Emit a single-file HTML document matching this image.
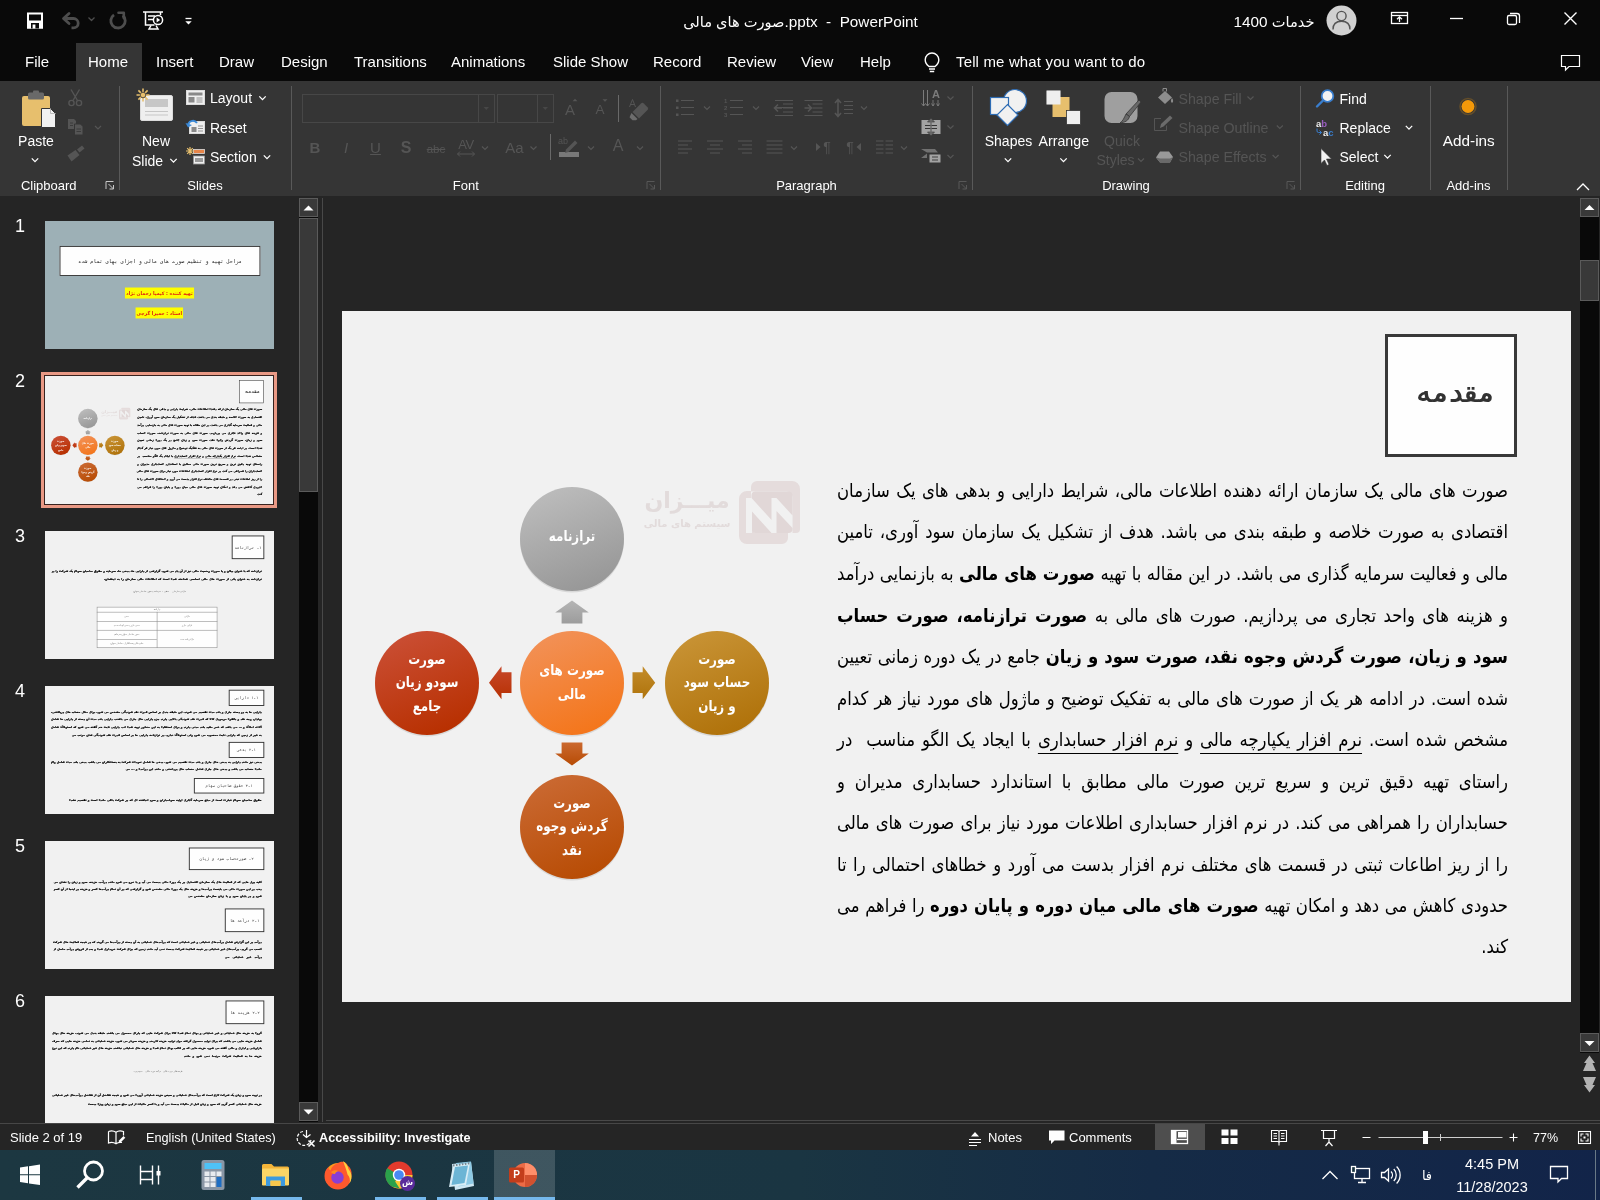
<!DOCTYPE html>
<html lang="en">
<head>
<meta charset="utf-8">
<title>PowerPoint</title>
<style>
*{box-sizing:border-box;margin:0;padding:0}
html,body{width:1600px;height:1200px;overflow:hidden;background:#262626}
body{font-family:"Liberation Sans","DejaVu Sans",sans-serif;color:#fff;position:relative}
#root{position:absolute;left:0;top:0;width:1600px;height:1200px;will-change:transform;opacity:0.9999}
.abs{position:absolute}
#titlebar{position:absolute;left:0;top:0;width:1600px;height:81px;background:#0a0a0a}
#ribbon{position:absolute;left:0;top:81px;width:1600px;height:115px;background:#363636}
#hometab{position:absolute;left:76px;top:43px;width:66px;height:38px;background:#363636}
.tab{position:absolute;top:52px;font-size:15px;color:#fff;white-space:nowrap;line-height:20px}
.t{position:absolute;white-space:nowrap}
#work{position:absolute;left:0;top:196px;width:1600px;height:927px;background:#262626}
#status{position:absolute;left:0;top:1123px;width:1600px;height:27px;background:#262626;border-top:1px solid #484848}
#taskbar{position:absolute;left:0;top:1150px;width:1600px;height:50px;background:linear-gradient(90deg,#1d3842 0%,#1b3643 50%,#162c47 72%,#13254a 100%)}

.slide{position:absolute;width:1229px;height:691px;background:#f2f2f2;overflow:hidden;color:#000}
.tbox{background:#fff;border:3px solid #3a3a3a}
.bl{position:absolute;left:392px;width:774px;height:30px;line-height:30px;font-family:"DejaVu Sans",sans-serif;font-size:19px;color:#000;white-space:nowrap;text-align:justify;text-align-last:justify;direction:rtl;transform:scaleX(0.8669);transform-origin:100% 50%}
.bl.last{text-align:right;text-align-last:right}
.bl b{font-weight:bold}
.bl u{text-underline-offset:7px;text-decoration-thickness:1px}
.ct{position:absolute;width:104px;height:26px;line-height:26px;text-align:center;font-family:"DejaVu Sans",sans-serif;font-weight:bold;font-size:14.5px;color:#fff;white-space:nowrap;transform:scaleX(0.82)}

.mini{position:absolute;left:0;top:0;width:1229px;height:691px;transform:scale(0.18633);transform-origin:0 0;color:#000}
.mb{background:#fff;border:5px solid #333;text-align:center;font-family:"DejaVu Sans Mono","DejaVu Sans",monospace;color:#444;white-space:nowrap}
.ml{position:absolute;height:30px;line-height:30px;font-family:"DejaVu Sans",sans-serif;font-weight:bold;font-size:15px;color:#000;-webkit-text-stroke:1.2px #000;white-space:nowrap;overflow:hidden;text-align:justify;text-align-last:justify}
.ml.last{text-align-last:right}
.mc{position:absolute;height:30px;line-height:30px;font-family:"DejaVu Sans",sans-serif;font-size:12px;color:#666;white-space:nowrap;text-align:center;overflow:hidden}
.sbtn{background:#3a3a3a;border:1px solid #5c5c5c}
.mini .bl{font-weight:bold;font-size:16.5px;-webkit-text-stroke:1px #000}
/* placeholders for later sections */
</style>
</head>
<body>
<div id="root">
<div id="titlebar"></div>
<div id="hometab"></div>
<div id="ribbon"></div>
<div id="work"></div>

<!-- title bar icons -->
<svg class="abs" style="left:0;top:0" width="1600" height="81" viewBox="0 0 1600 81">
  <!-- save -->
  <rect x="28" y="13.500" width="14" height="14" fill="none" stroke="#fff" stroke-width="2"/>
  <rect x="27" y="20.500" width="16" height="8" fill="#fff"/>
  <rect x="31" y="23" width="8" height="5.500" fill="#0a0a0a"/>
  <rect x="32.600" y="24.500" width="2.800" height="4" fill="#fff"/>
  <!-- undo -->
  <g fill="none" stroke="#4e4e4e" stroke-width="2.800" stroke-linejoin="round">
    <path d="M69 13.500l-5.500 5 5.500 5" stroke-linecap="round"/>
    <path d="M64 18.500h9.500a4.700 4.700 0 0 1 0 9.400h-2"/>
    <path d="M88.500 17.500l3 3 3-3" stroke-width="1.300"/>
    <!-- redo -->
    <path d="M114 14.800a7.200 7.200 0 1 0 8.800 0.600"/>
    <path d="M118.500 12.800h5.300v5.300" stroke-width="2.600" stroke-linecap="round"/>
  </g>
  <!-- present from beginning -->
  <g fill="none" stroke="#fff" stroke-width="1.5">
    <path d="M143 12h20"/>
    <path d="M145.5 12v13h9"/>
    <path d="M160.5 12v3"/>
    <path d="M148 16h7M148 19.5h5"/>
    <circle cx="158" cy="20" r="4.6" fill="#0a0a0a"/>
    <path d="M151 25.5l-2 3.5h9l-2-3.5"/>
  </g>
  <path d="M156.6 17.6l3.6 2.4-3.6 2.4z" fill="#fff"/>
  <!-- customize -->
  <path d="M185.5 18.5h6" stroke="#fff" stroke-width="1.3"/>
  <path d="M185.3 21.2h6.4l-3.2 3.4z" fill="#fff"/>
  <!-- avatar -->
  <circle cx="1341.5" cy="20.5" r="15" fill="#d2d2d2"/>
  <g fill="none" stroke="#555" stroke-width="1.4">
    <circle cx="1341.5" cy="16" r="4.6"/>
    <path d="M1333 29.5c0-6 3.5-8.2 8.500-8.2s8.500 2.200 8.500 8.200"/>
  </g>
  <!-- ribbon display options -->
  <g fill="none" stroke="#fff" stroke-width="1.300" transform="translate(0,-1)">
    <rect x="1391.500" y="13.500" width="16" height="11"/>
    <path d="M1391.500 16.500h16"/>
    <path d="M1399.500 23v-5M1397 20.300l2.500-2.500 2.500 2.500"/>
  <!-- minimize -->
  <path d="M1450 19.500h13"/>
  <!-- restore -->
    <rect x="1507.500" y="16.500" width="9" height="9" rx="1.500"/>
    <path d="M1510 14.500h7a2.500 2.500 0 0 1 2.500 2.500v7"/>
  <!-- close -->
  <path d="M1564.500 13.500l12 12M1576.500 13.500l-12 12" stroke-width="1.400"/>
  </g>
  <!-- lightbulb -->
  <g fill="none" stroke="#fff" stroke-width="1.4">
    <path d="M929 66.500c-2.800-2.200-3.800-4.200-3.800-6.800a6.800 6.800 0 0 1 13.600 0c0 2.600-1 4.600-3.800 6.800z"/>
    <path d="M929 69h6M929.800 71.500h4.400"/>
  </g>
  <!-- comments -->
  <path d="M1561.500 55.500h18v11h-10.500l-3.500 3.500v-3.500h-4z" fill="none" stroke="#fff" stroke-width="1.2"/>
</svg>
<div class="t" dir="rtl" style="left:683px;top:12px;width:235px;text-align:center;font-size:15.3px;line-height:20px;direction:ltr"><span dir="rtl" style="font-size:14.6px">صورت های مالی</span>.pptx&nbsp; - &nbsp;PowerPoint</div>
<div class="t" style="left:1231px;top:12px;width:86px;text-align:center;font-size:15.3px;line-height:20px"><span style="font-size:14.6px">خدمات</span> 1400</div>
<div class="tab" style="left:25px">File</div>
<div class="tab" style="left:88px">Home</div>
<div class="tab" style="left:156px">Insert</div>
<div class="tab" style="left:219px">Draw</div>
<div class="tab" style="left:281px">Design</div>
<div class="tab" style="left:354px">Transitions</div>
<div class="tab" style="left:451px">Animations</div>
<div class="tab" style="left:553px">Slide Show</div>
<div class="tab" style="left:653px">Record</div>
<div class="tab" style="left:727px">Review</div>
<div class="tab" style="left:801px">View</div>
<div class="tab" style="left:860px">Help</div>
<div class="tab" style="left:956px;letter-spacing:0.15px">Tell me what you want to do</div>

<svg class="abs" style="left:0;top:0" width="1600" height="200" viewBox="0 0 1600 200">
<path d="M119.5 86V190" stroke="#5a5a5a" stroke-width="1"/>
<path d="M291.5 86V190" stroke="#5a5a5a" stroke-width="1"/>
<path d="M660.5 86V190" stroke="#5a5a5a" stroke-width="1"/>
<path d="M972.5 86V190" stroke="#5a5a5a" stroke-width="1"/>
<path d="M1300.5 86V190" stroke="#5a5a5a" stroke-width="1"/>
<path d="M1430.5 86V190" stroke="#5a5a5a" stroke-width="1"/>
<path d="M1507.5 86V190" stroke="#5a5a5a" stroke-width="1"/>
<path d="M106 189.0v-7.5h7.5" fill="none" stroke="#c8c8c8" stroke-width="1"/><path d="M108.5 184.0l5 5M113.5 185.0v4h-4" fill="none" stroke="#c8c8c8" stroke-width="1"/>
<path d="M647 189.0v-7.5h7.5" fill="none" stroke="#585858" stroke-width="1"/><path d="M649.5 184.0l5 5M654.5 185.0v4h-4" fill="none" stroke="#585858" stroke-width="1"/>
<path d="M959 189.0v-7.5h7.5" fill="none" stroke="#585858" stroke-width="1"/><path d="M961.5 184.0l5 5M966.5 185.0v4h-4" fill="none" stroke="#585858" stroke-width="1"/>
<path d="M1287 189.0v-7.5h7.5" fill="none" stroke="#585858" stroke-width="1"/><path d="M1289.5 184.0l5 5M1294.5 185.0v4h-4" fill="none" stroke="#585858" stroke-width="1"/>
<path d="M1577 190l6-6 6 6" fill="none" stroke="#fff" stroke-width="1.3"/>
<g>
<rect x="22" y="96" width="28" height="30" rx="2" fill="#e8c06e"/>
<rect x="28" y="92.500" width="16" height="7" rx="1.500" fill="#6a6a6a"/>
<rect x="33" y="90.500" width="6" height="4" rx="1" fill="#6a6a6a"/>
<path d="M41.500 108.500h9l5 5v14h-14z" fill="#f2f2f2" stroke="#363636" stroke-width="1"/>
<path d="M50.500 108.500v5h5" fill="none" stroke="#bdbdbd" stroke-width="1"/>
</g>
<path d="M31.8 158.4l3.2 3.2 3.2 -3.2" fill="none" stroke="#fff" stroke-width="1.3"/>
<g fill="none" stroke="#565656" stroke-width="1.4">
<path d="M71 89.500l6.500 11M79.500 89.500l-6.500 11"/>
<circle cx="71.500" cy="103" r="2.600"/><circle cx="79" cy="103" r="2.600"/></g>
<g fill="#565656">
<path d="M68 119h6l2 2v8h-8z"/><path d="M74.500 124h6l2.500 2.500v8.500h-8.500z" stroke="#363636" stroke-width="1"/>
</g><g stroke="#363636" stroke-width="0.800"><path d="M70 123h3M70 125.500h3M76.500 129h4.500M76.500 131.500h4.500"/></g>
<path d="M95.0 126.0l3.0 3.0 3.0 -3.0" fill="none" stroke="#565656" stroke-width="1.2"/>
<g fill="#565656"><path d="M67.500 155.500l8-5.500 4 5-8 6.500z"/><path d="M77 149.500l5-4 2.500 3-5 4z"/></g>
<g>
<rect x="140.500" y="95.500" width="32" height="25" rx="1.500" fill="#f0f0f0" stroke="#dcdcdc"/>
<rect x="145" y="99" width="23" height="8" fill="#c8c8c8"/>
<path d="M145 111.500h23M145 115h23" stroke="#c8c8c8" stroke-width="1.200"/>
<g stroke="#e8c06e" stroke-width="1.600"><path d="M143 88.500v13M136.500 95h13M138.400 90.400l9.200 9.200M147.600 90.400l-9.200 9.200"/></g>
<circle cx="143" cy="95" r="2.800" fill="#e8c06e" stroke="#363636" stroke-width="0.800"/>
</g>
<path d="M170.3 158.9l3.2 3.2 3.2 -3.2" fill="none" stroke="#fff" stroke-width="1.3"/>
<g><rect x="186.500" y="90.500" width="18" height="14" fill="#f0f0f0" stroke="#dcdcdc"/>
<rect x="188.500" y="92.500" width="14" height="3" fill="#8a8a8a"/><rect x="188.500" y="97" width="6" height="5.500" fill="#8a8a8a"/>
<path d="M196.500 98h6M196.500 100h6M196.500 102h6" stroke="#8a8a8a" stroke-width="0.900"/></g>
<path d="M259.3 96.4l3.2 3.2 3.2 -3.2" fill="none" stroke="#fff" stroke-width="1.3"/>
<g><rect x="189.500" y="121.500" width="15" height="12" fill="#f0f0f0" stroke="#dcdcdc"/>
<rect x="191.500" y="127" width="5" height="5" fill="#8a8a8a"/><path d="M198 126h5M198 128.500h5M198 131h5" stroke="#8a8a8a" stroke-width="0.900"/>
<path d="M188 126c0-5 6-7 9-3" fill="none" stroke="#3b8ad8" stroke-width="2"/><path d="M185.500 123l2.500 4.500 4-2.500z" fill="#3b8ad8"/></g>
<g><rect x="193.500" y="149.500" width="11" height="4" fill="#e8864a" stroke="#dcdcdc" stroke-width="0.800"/>
<rect x="193.500" y="156" width="11" height="8" fill="#f0f0f0" stroke="#9a9a9a" stroke-width="0.800"/><rect x="195" y="158" width="8" height="4" fill="#9a9a9a"/>
<g stroke="#e8c06e" stroke-width="1.200"><path d="M190 147v8M186 151h8M187.200 148.200l5.600 5.600M192.800 148.200l-5.600 5.600"/></g></g>
<path d="M263.8 155.4l3.2 3.2 3.2 -3.2" fill="none" stroke="#fff" stroke-width="1.3"/>
<g fill="none" stroke="#484848" stroke-width="1"><rect x="302.500" y="94.500" width="192" height="28"/><path d="M478.500 94.500v28"/><rect x="497.500" y="94.500" width="56" height="28"/><path d="M537.500 94.500v28"/></g>
<path d="M483.500 107h5.500l-2.750 3z M542.500 107h5.500l-2.750 3z" fill="#484848"/>
<path d="M618.5 95V122" stroke="#6a6a6a" stroke-width="1"/>
<path d="M550.5 134V160" stroke="#6a6a6a" stroke-width="1"/>
<path d="M632.500 112l8.500-8.500a2 2 0 0 1 2.800 0l3.700 3.700a2 2 0 0 1 0 2.800l-8.500 8.500z" fill="#565656"/><path d="M631.500 113l6 6-1.500 1.200h-3.500l-3-3z" fill="#6e6e6e"/><path d="M629.500 107l3-7.500 3 7.500M630.700 104.500h3.600" fill="none" stroke="#565656" stroke-width="1"/>
<path d="M572.500 101.300l2.500-2.500 2.500 2.500z" fill="#565656"/><path d="M602.500 99.300l2.500 2.500 2.500-2.500z" fill="#565656"/>
<path d="M457.500 154h17M460 151.500l-2.500 2.500 2.500 2.500M472 151.500l2.500 2.500-2.500 2.500" fill="none" stroke="#565656" stroke-width="1"/>
<path d="M482.0 146.5l3.0 3.0 3.0 -3.0" fill="none" stroke="#565656" stroke-width="1.2"/>
<path d="M530.5 146.5l3.0 3.0 3.0 -3.0" fill="none" stroke="#565656" stroke-width="1.2"/>
<rect x="559" y="152" width="20" height="5" fill="#7a7a7a"/><path d="M566 149.500l9-9 2.500 2.500-9 9-3.500 1z" fill="#565656"/>
<path d="M588.0 146.5l3.0 3.0 3.0 -3.0" fill="none" stroke="#565656" stroke-width="1.2"/>
<path d="M637.0 146.5l3.0 3.0 3.0 -3.0" fill="none" stroke="#565656" stroke-width="1.2"/>
<rect x="676" y="99.5" width="2.500" height="2.500" fill="#565656"/><path d="M681 100.5h13" stroke="#565656" stroke-width="1"/>
<rect x="676" y="106.5" width="2.500" height="2.500" fill="#565656"/><path d="M681 107.5h13" stroke="#565656" stroke-width="1"/>
<rect x="676" y="113.5" width="2.500" height="2.500" fill="#565656"/><path d="M681 114.5h13" stroke="#565656" stroke-width="1"/>
<path d="M704.0 106.5l3.0 3.0 3.0 -3.0" fill="none" stroke="#565656" stroke-width="1.2"/>
<path d="M730 100.5h13" stroke="#565656" stroke-width="1"/>
<path d="M730 107.5h13" stroke="#565656" stroke-width="1"/>
<path d="M730 114.5h13" stroke="#565656" stroke-width="1"/>
<path d="M753.0 106.5l3.0 3.0 3.0 -3.0" fill="none" stroke="#565656" stroke-width="1.2"/>
<path d="M775.0 107.5h18" stroke="#565656" stroke-width="1"/>
<path d="M775 100.500h18M775 115.500h18" stroke="#565656" stroke-width="1"/>
<path d="M783 104h10M783 108h10M783 112h10" stroke="#565656" stroke-width="1"/>
<path d="M775 108h7M778 104.500l-3.500 3.500 3.500 3.500" fill="none" stroke="#565656" stroke-width="1.600"/>
<path d="M804.5 100.500h18M804.5 115.500h18" stroke="#565656" stroke-width="1"/>
<path d="M812.5 104h10M812.5 108h10M812.5 112h10" stroke="#565656" stroke-width="1"/>
<path d="M804.5 108h7M808.0 104.500l3.500 3.500-3.500 3.500" fill="none" stroke="#565656" stroke-width="1.600"/>
<path d="M838 100v16M835 103l3-3.500 3 3.500M835 113l3 3.500 3-3.500" fill="none" stroke="#565656" stroke-width="1.600"/>
<path d="M844 101.500h9M844 105.500h9M844 109.500h9M844 113.500h9" stroke="#565656" stroke-width="1"/>
<path d="M861.0 106.5l3.0 3.0 3.0 -3.0" fill="none" stroke="#565656" stroke-width="1.2"/>
<path d="M678.0 141.0h14" stroke="#565656" stroke-width="1"/>
<path d="M678.0 145.0h10" stroke="#565656" stroke-width="1"/>
<path d="M678.0 149.0h14" stroke="#565656" stroke-width="1"/>
<path d="M678.0 153.0h10" stroke="#565656" stroke-width="1"/>
<path d="M707.0 141.0h16" stroke="#565656" stroke-width="1"/>
<path d="M710.0 145.0h10" stroke="#565656" stroke-width="1"/>
<path d="M707.0 149.0h16" stroke="#565656" stroke-width="1"/>
<path d="M710.0 153.0h10" stroke="#565656" stroke-width="1"/>
<path d="M738 141h14" stroke="#565656" stroke-width="1"/>
<path d="M742 145h10" stroke="#565656" stroke-width="1"/>
<path d="M738 149h14" stroke="#565656" stroke-width="1"/>
<path d="M742 153h10" stroke="#565656" stroke-width="1"/>
<path d="M766.5 141.0h16" stroke="#565656" stroke-width="1"/>
<path d="M766.5 145.0h16" stroke="#565656" stroke-width="1"/>
<path d="M766.5 149.0h16" stroke="#565656" stroke-width="1"/>
<path d="M766.5 153.0h16" stroke="#565656" stroke-width="1"/>
<path d="M791.0 146.5l3.0 3.0 3.0 -3.0" fill="none" stroke="#565656" stroke-width="1.2"/>
<path d="M816 143l4.500 4-4.500 4z" fill="#565656"/>
<path d="M861 143l-4.500 4 4.500 4z" fill="#565656"/>
<path d="M876 141h7.500M885.500 141h7.500" stroke="#565656" stroke-width="1"/>
<path d="M876 145h7.500M885.500 145h7.500" stroke="#565656" stroke-width="1"/>
<path d="M876 149h7.500M885.500 149h7.500" stroke="#565656" stroke-width="1"/>
<path d="M876 153h7.500M885.500 153h7.500" stroke="#565656" stroke-width="1"/>
<path d="M901.0 146.5l3.0 3.0 3.0 -3.0" fill="none" stroke="#565656" stroke-width="1.2"/>
<path d="M923.500 90v16M927.500 90v16M921.500 103.500l2 2.500 2-2.500M925.500 103.500l2 2.500 2-2.500" fill="none" stroke="#7c7c7c" stroke-width="1"/>
<path d="M933 100v6M938 100v6M931.500 103.500l1.500 2.500 1.500-2.500M936.500 103.500l1.500 2.500 1.500-2.500" fill="none" stroke="#7c7c7c" stroke-width="0.900"/>
<path d="M947.5 96.5l3.0 3.0 3.0 -3.0" fill="none" stroke="#565656" stroke-width="1.2"/>
<rect x="921.500" y="120" width="19" height="14" fill="#a4a4a4"/><path d="M925 125.500h12M925 128.500h12" stroke="#363636" stroke-width="1"/><path d="M927.500 122l3.500-4 3.500 4zM927.500 132l3.500 4 3.500-4z" fill="#6a6a6a" stroke="#363636" stroke-width="0.600"/><path d="M931 121v12" stroke="#6a6a6a" stroke-width="1.400"/>
<path d="M947.5 125.5l3.0 3.0 3.0 -3.0" fill="none" stroke="#565656" stroke-width="1.2"/>
<path d="M921 149h14l3 3.500h-11zM921 158l6-4.500v4.500z" fill="#727272"/><rect x="929.500" y="154.500" width="11" height="8" fill="#a4a4a4"/><path d="M932 157h6M932 160h6" stroke="#363636" stroke-width="0.900"/>
<path d="M947.5 155.0l3.0 3.0 3.0 -3.0" fill="none" stroke="#565656" stroke-width="1.2"/>
<g stroke="#2f6db5" stroke-width="1.200">
<circle cx="1015" cy="101" r="11.500" fill="#f2f2f2"/>
<rect x="990.500" y="97.500" width="18" height="17" fill="#f2f2f2"/>
<path d="M1007.500 104.500l10.500 10.500-10.500 10.500-10.500-10.500z" fill="#f2f2f2"/></g>
<path d="M1004.8 158.4l3.2 3.2 3.2 -3.2" fill="none" stroke="#fff" stroke-width="1.3"/>
<g><rect x="1046.500" y="90.500" width="14" height="14" fill="#f0f0f0" stroke="#363636" stroke-width="0.800"/>
<rect x="1052.500" y="97" width="17" height="20" fill="#e8c06e"/>
<rect x="1066.500" y="110.500" width="14" height="14" fill="#f0f0f0" stroke="#363636" stroke-width="0.800"/>
<rect x="1046.500" y="90.500" width="14" height="14" fill="#f0f0f0"/></g>
<path d="M1060.3 158.4l3.2 3.2 3.2 -3.2" fill="none" stroke="#fff" stroke-width="1.3"/>
<rect x="1104.500" y="92" width="33" height="31" rx="7" fill="#a0a0a0"/>
<path d="M1141 102l-11.500 14.500-3.500-2.500 13-14z" fill="#6a6a6a" stroke="#363636" stroke-width="0.800"/><path d="M1126 114l3.500 2.500c-1 4-4.500 6-9.500 6.500 3-2 4-5 6-9z" fill="#6a6a6a" stroke="#363636" stroke-width="0.800"/>
<path d="M1138.0 158.5l3.0 3.0 3.0 -3.0" fill="none" stroke="#565656" stroke-width="1.2"/>
<path d="M1158 97.500l7-6.500 7 6.500-7 6.500z" fill="#8e8e8e"/><path d="M1163 91.500v-3h3.500v3" fill="none" stroke="#8e8e8e" stroke-width="1"/><path d="M1172 98c1.500 2 1.500 4 0 5-1.500-1-1.500-3 0-5z" fill="#8e8e8e"/>
<path d="M1247.5 96.5l3.0 3.0 3.0 -3.0" fill="none" stroke="#565656" stroke-width="1.2"/>
<path d="M1161 118.500h-6.500v12h12v-5" fill="none" stroke="#565656" stroke-width="1"/><path d="M1160 128l1-4 9-8.500 2.500 2.500-9 8.500z" fill="#6c6c6c"/>
<path d="M1276.8 125.5l3.0 3.0 3.0 -3.0" fill="none" stroke="#565656" stroke-width="1.2"/>
<path d="M1160 151.500h9l4 5.500-3 5.500h-10l-4-5z" fill="#9a9a9a"/><path d="M1156 157.500l4 5h10l3-5.500-3 1.500h-10z" fill="#6a6a6a"/>
<path d="M1272.6 155.0l3.0 3.0 3.0 -3.0" fill="none" stroke="#565656" stroke-width="1.2"/>
<circle cx="1327.500" cy="96" r="5.800" fill="#f4f4f4" stroke="#3a7fcf" stroke-width="1.800"/><path d="M1323 100.500l-6 6" stroke="#3a7fcf" stroke-width="2.400" stroke-linecap="round"/>
<path d="M1317 128.500v2.500a1.500 1.500 0 0 0 1.500 1.500h3M1319.500 130.500l2 2-2 2" fill="none" stroke="#3a7fcf" stroke-width="1"/>
<path d="M1405.8 125.9l3.2 3.2 3.2 -3.2" fill="none" stroke="#fff" stroke-width="1.3"/>
<path d="M1321 148.500v15l3.500-3.500 2.500 5.500 2-1-2.500-5.500h5z" fill="#f4f4f4" stroke="#363636" stroke-width="0.600"/>
<path d="M1384.3 154.9l3.2 3.2 3.2 -3.2" fill="none" stroke="#fff" stroke-width="1.3"/>
<circle cx="1468" cy="106.500" r="6.500" fill="#f59a0a"/><circle cx="1468" cy="106.500" r="8" fill="none" stroke="#f59a0a" stroke-opacity="0.250" stroke-width="1.500"/>
</svg>
<div class="t" style="left:-11.299999999999997px;width:120px;text-align:center;top:175.5px;font-size:13px;line-height:20px;color:#fff;">Clipboard</div>
<div class="t" style="left:145px;width:120px;text-align:center;top:175.5px;font-size:13px;line-height:20px;color:#fff;">Slides</div>
<div class="t" style="left:405.8px;width:120px;text-align:center;top:175.5px;font-size:13px;line-height:20px;color:#fff;">Font</div>
<div class="t" style="left:746.5px;width:120px;text-align:center;top:175.5px;font-size:13px;line-height:20px;color:#fff;">Paragraph</div>
<div class="t" style="left:1066px;width:120px;text-align:center;top:175.5px;font-size:13px;line-height:20px;color:#fff;">Drawing</div>
<div class="t" style="left:1305px;width:120px;text-align:center;top:175.5px;font-size:13px;line-height:20px;color:#fff;">Editing</div>
<div class="t" style="left:1408.5px;width:120px;text-align:center;top:175.5px;font-size:13px;line-height:20px;color:#fff;">Add-ins</div>
<div class="t" style="left:-24px;width:120px;text-align:center;top:131px;font-size:14px;line-height:20px;color:#fff;">Paste</div>
<div class="t" style="left:96px;width:120px;text-align:center;top:131px;font-size:14px;line-height:20px;color:#fff;">New</div>
<div class="t" style="left:132px;top:150.5px;font-size:14px;line-height:20px;color:#fff;">Slide</div>
<div class="t" style="left:210px;top:88px;font-size:14px;line-height:20px;color:#fff;">Layout</div>
<div class="t" style="left:210px;top:117.5px;font-size:14px;line-height:20px;color:#fff;">Reset</div>
<div class="t" style="left:210px;top:147px;font-size:14px;line-height:20px;color:#fff;">Section</div>
<div class="t" style="left:510px;width:120px;text-align:center;top:100px;font-size:15px;line-height:20px;color:#565656;">A</div>
<div class="t" style="left:540px;width:120px;text-align:center;top:100px;font-size:13.5px;line-height:20px;color:#565656;">A</div>
<div class="t" style="left:255px;width:120px;text-align:center;top:137.5px;font-size:15px;line-height:20px;color:#565656;font-weight:bold">B</div>
<div class="t" style="left:286px;width:120px;text-align:center;top:137.5px;font-size:15px;line-height:20px;color:#565656;font-style:italic;font-family:"Liberation Serif",serif;font-weight:bold">I</div>
<div class="t" style="left:315.5px;width:120px;text-align:center;top:137.5px;font-size:15px;line-height:20px;color:#565656;text-decoration:underline">U</div>
<div class="t" style="left:346px;width:120px;text-align:center;top:137.5px;font-size:16px;line-height:20px;color:#565656;font-weight:bold">S</div>
<div class="t" style="left:376px;width:120px;text-align:center;top:138.5px;font-size:11.5px;line-height:20px;color:#565656;text-decoration:line-through">abc</div>
<div class="t" style="left:406px;width:120px;text-align:center;top:135px;font-size:13px;line-height:20px;color:#565656;letter-spacing:-0.5px">AV</div>
<div class="t" style="left:454.5px;width:120px;text-align:center;top:137.5px;font-size:15px;line-height:20px;color:#565656;">Aa</div>
<div class="t" style="left:503px;width:120px;text-align:center;top:131px;font-size:9px;line-height:20px;color:#565656;">ab</div>
<div class="t" style="left:558px;width:120px;text-align:center;top:135.5px;font-size:16px;line-height:20px;color:#565656;">A</div>
<div class="t" style="left:724px;top:96.5px;font-size:6px;line-height:8px;color:#565656;font-weight:bold">1</div>
<div class="t" style="left:724px;top:103.5px;font-size:6px;line-height:8px;color:#565656;font-weight:bold">2</div>
<div class="t" style="left:724px;top:110.5px;font-size:6px;line-height:8px;color:#565656;font-weight:bold">3</div>
<div class="t" style="left:767px;width:120px;text-align:center;top:137px;font-size:14px;line-height:20px;color:#565656;">¶</div>
<div class="t" style="left:790px;width:120px;text-align:center;top:137px;font-size:14px;line-height:20px;color:#565656;">¶</div>
<div class="t" style="left:876px;width:120px;text-align:center;top:84px;font-size:11px;line-height:20px;color:#7c7c7c;font-weight:bold">A</div>
<div class="t" style="left:948.5px;width:120px;text-align:center;top:130.5px;font-size:14px;line-height:20px;color:#fff;">Shapes</div>
<div class="t" style="left:1003.8px;width:120px;text-align:center;top:130.5px;font-size:14.2px;line-height:20px;color:#fff;">Arrange</div>
<div class="t" style="left:1062px;width:120px;text-align:center;top:130.5px;font-size:14px;line-height:20px;color:#565656;">Quick</div>
<div class="t" style="left:1055.5px;width:120px;text-align:center;top:150px;font-size:14px;line-height:20px;color:#565656;">Styles</div>
<div class="t" style="left:1178.5px;top:88.5px;font-size:14.2px;line-height:20px;color:#565656;">Shape Fill</div>
<div class="t" style="left:1178.5px;top:117.5px;font-size:14.2px;line-height:20px;color:#565656;">Shape Outline</div>
<div class="t" style="left:1178.5px;top:147px;font-size:14.2px;line-height:20px;color:#565656;">Shape Effects</div>
<div class="t" style="left:1339.5px;top:88.5px;font-size:14px;line-height:20px;color:#fff;">Find</div>
<div class="t" style="left:1316px;top:119px;font-size:9.5px;line-height:9px;color:#f0f0f0;font-weight:bold">a<span style="color:#9a5fc0">b</span></div>
<div class="t" style="left:1323px;top:128px;font-size:9.5px;line-height:9px;color:#f0f0f0;font-weight:bold">a<span style="color:#3a7fcf">c</span></div>
<div class="t" style="left:1339.5px;top:118px;font-size:14px;line-height:20px;color:#fff;">Replace</div>
<div class="t" style="left:1339.5px;top:146.5px;font-size:14px;line-height:20px;color:#fff;">Select</div>
<div class="t" style="left:1408.8px;width:120px;text-align:center;top:130.5px;font-size:15.3px;line-height:20px;color:#fff;">Add-ins</div>

<div class="t" style="left:14px;top:215.5px;width:12px;text-align:center;font-size:18px;line-height:20px;color:#fff">1</div>
<div class="t" style="left:14px;top:370.5px;width:12px;text-align:center;font-size:18px;line-height:20px;color:#fff">2</div>
<div class="t" style="left:14px;top:525.5px;width:12px;text-align:center;font-size:18px;line-height:20px;color:#fff">3</div>
<div class="t" style="left:14px;top:680.5px;width:12px;text-align:center;font-size:18px;line-height:20px;color:#fff">4</div>
<div class="t" style="left:14px;top:835.5px;width:12px;text-align:center;font-size:18px;line-height:20px;color:#fff">5</div>
<div class="t" style="left:14px;top:990.5px;width:12px;text-align:center;font-size:18px;line-height:20px;color:#fff">6</div>
<div class="abs" style="left:44.5px;top:220.5px;width:229px;height:128.5px;overflow:hidden;background:#9eb1b7"><div class="mini"><div class="abs" style="left:77.8px;top:134.2px;width:1078.7px;height:161.0px;background:#fff;border:5px solid #333;line-height:151.0px;text-align:center;font-family:'DejaVu Sans Mono','DejaVu Sans',monospace;font-size:27px;color:#222;white-space:nowrap" dir="rtl">مراحل تهیه و تنظیم صورت های مالی و اجزای بهای تمام شده</div><div class="abs" style="left:429.3px;top:356.9px;width:370.3px;height:59.0px;background:#ffff00;line-height:59.0px;text-align:center;font-family:'DejaVu Sans',sans-serif;font-weight:bold;font-size:25px;color:#e02010;white-space:nowrap" dir="rtl">تهیه کننده : کیمیا رحمان نژاد</div><div class="abs" style="left:485.7px;top:464.2px;width:254.9px;height:59.0px;background:#ffff00;line-height:59.0px;text-align:center;font-family:'DejaVu Sans',sans-serif;font-weight:bold;font-size:25px;color:#e02010;white-space:nowrap" dir="rtl">استاد : حمیرا گرجی</div></div></div>
<div class="abs" style="left:44.5px;top:375.5px;width:229px;height:128.5px;overflow:hidden;background:#f2f2f2"><div class="mini"><div class="abs tbox" style="left:1043px;top:23px;width:132px;height:123px"></div>
<div class="abs" dir="rtl" style="left:1048px;top:67px;width:131px;text-align:center;font-family:'DejaVu Sans Mono','DejaVu Sans',monospace;font-weight:bold;font-size:25.5px;line-height:30px;color:#333;letter-spacing:0">مقدمه</div>
<div class="bl" dir="rtl" style="top:163.5px">صورت های مالی یک سازمان ارائه دهنده اطلاعات مالی، شرایط دارایی و بدهی های یک سازمان</div>
<div class="bl" dir="rtl" style="top:205.0px">اقتصادی به صورت خلاصه و طبقه بندی می باشد. هدف از تشکیل یک سازمان سود آوری، تامین</div>
<div class="bl" dir="rtl" style="top:246.5px">مالی و فعالیت سرمایه گذاری می باشد. در این مقاله با تهیه <b>صورت های مالی</b> به بازنمایی درآمد</div>
<div class="bl" dir="rtl" style="top:288.5px">و هزینه های واحد تجاری می پردازیم. صورت های مالی به <b>صورت ترازنامه، صورت حساب</b></div>
<div class="bl" dir="rtl" style="top:330.0px"><b>سود و زیان، صورت گردش وجوه نقد، صورت سود و زیان</b> جامع در یک دوره زمانی تعیین</div>
<div class="bl" dir="rtl" style="top:371.5px">شده است. در ادامه هر یک از صورت های مالی به تفکیک توضیح و ماژول های مورد نیاز هر کدام</div>
<div class="bl" dir="rtl" style="top:413.0px">مشخص شده است. <u>نرم افزار یکپارچه مالی</u> و <u>نرم افزار حسابداری</u> با ایجاد یک الگو مناسب&nbsp; در</div>
<div class="bl" dir="rtl" style="top:454.5px">راستای تهیه دقیق ترین و سریع ترین صورت مالی مطابق با استاندارد حسابداری مدیران و</div>
<div class="bl" dir="rtl" style="top:496.0px">حسابداران را همراهی می کند. در نرم افزار حسابداری اطلاعات مورد نیاز برای صورت های مالی</div>
<div class="bl" dir="rtl" style="top:537.5px">را از ریز اطاعات ثبتی در قسمت های مختلف نرم افزار بدست می آورد و خطاهای احتمالی را تا</div>
<div class="bl" dir="rtl" style="top:578.5px">حدودی کاهش می دهد و امکان تهیه <b>صورت های مالی میان دوره و پایان دوره</b> را فراهم می</div>
<div class="bl last" dir="rtl" style="top:620.0px">کند.</div>
<svg class="abs" style="left:394px;top:167px" width="68" height="70" viewBox="736 478 68 70">
<path d="M757 481h35a8 8 0 0 1 8 8v40a4 4 0 0 1-4 4h-3.500v-36a5.500 5.500 0 0 0-5.500-5.500h-36v-4.500a6 6 0 0 1 6-6z" fill="#e6dddd"/>
<path d="M739 499a8 8 0 0 1 8-8h4v36.500a5.500 5.500 0 0 0 5.500 5.500h31.500v5a6 6 0 0 1-6 6h-35a8 8 0 0 1-8-8z" fill="#e6dddd"/>
<rect x="751.500" y="491.500" width="41" height="41.500" rx="4" fill="#e2d8d8"/>
<path d="M746 533v-35l5.500 0 20 22v-22h5l16 17.500v12.500l-16-17v22h-5l-19.500-21.500v21.500z" fill="#f2f2f2"/>
</svg>
<div class="abs" dir="rtl" style="left:298px;top:175px;width:94px;text-align:center;font-family:'DejaVu Sans',sans-serif;font-weight:bold;font-size:22px;line-height:30px;color:#e3dcdc;white-space:nowrap">میـــزان</div>
<div class="abs" dir="rtl" style="left:298px;top:205px;width:94px;text-align:center;font-family:'DejaVu Sans',sans-serif;font-weight:bold;font-size:10px;line-height:16px;color:#e3dcdc;white-space:nowrap">سیستم های مالی</div>
<svg class="abs" style="left:18px;top:169px" width="420" height="410" viewBox="360 480 420 410">
<defs>
<linearGradient id="t0" x1="0.3" y1="0" x2="0.7" y2="1"><stop offset="0" stop-color="#bdbdbd"/><stop offset="1" stop-color="#979797"/></linearGradient>
<linearGradient id="t1" x1="0.3" y1="0" x2="0.7" y2="1"><stop offset="0" stop-color="#f39258"/><stop offset="1" stop-color="#f5761a"/></linearGradient>
<linearGradient id="t2" x1="0.3" y1="0" x2="0.7" y2="1"><stop offset="0" stop-color="#c99436"/><stop offset="1" stop-color="#b0720a"/></linearGradient>
<linearGradient id="t3" x1="0.3" y1="0" x2="0.7" y2="1"><stop offset="0" stop-color="#cb4f35"/><stop offset="1" stop-color="#b83000"/></linearGradient>
<linearGradient id="t4" x1="0.3" y1="0" x2="0.7" y2="1"><stop offset="0" stop-color="#cb6a33"/><stop offset="1" stop-color="#b84c04"/></linearGradient>
<linearGradient id="ta0" x1="0" y1="0" x2="0" y2="1"><stop offset="0" stop-color="#b6b6b6"/><stop offset="1" stop-color="#9d9d9d"/></linearGradient>
<linearGradient id="ta2" x1="0" y1="0" x2="0" y2="1"><stop offset="0" stop-color="#c48d2c"/><stop offset="1" stop-color="#b0740c"/></linearGradient>
<linearGradient id="ta3" x1="0" y1="0" x2="0" y2="1"><stop offset="0" stop-color="#c8492c"/><stop offset="1" stop-color="#b83204"/></linearGradient>
<linearGradient id="ta4" x1="0" y1="0" x2="0" y2="1"><stop offset="0" stop-color="#cc6a30"/><stop offset="1" stop-color="#b84c05"/></linearGradient>
</defs>
<circle cx="572" cy="540.5" r="52" fill="#000" fill-opacity="0.10"/>
<circle cx="572" cy="539" r="52" fill="url(#t0)"/>
<circle cx="572" cy="684.5" r="52" fill="#000" fill-opacity="0.10"/>
<circle cx="572" cy="683" r="52" fill="url(#t1)"/>
<circle cx="717" cy="684.5" r="52" fill="#000" fill-opacity="0.10"/>
<circle cx="717" cy="683" r="52" fill="url(#t2)"/>
<circle cx="427" cy="684.5" r="52" fill="#000" fill-opacity="0.10"/>
<circle cx="427" cy="683" r="52" fill="url(#t3)"/>
<circle cx="572" cy="828.5" r="52" fill="#000" fill-opacity="0.10"/>
<circle cx="572" cy="827" r="52" fill="url(#t4)"/>
<path d="M572 600.500l16.800 12h-6.400v11h-20.800v-11h-6.400z" fill="url(#ta0)"/>
<path d="M655.200 682.700l-12.500 16.500v-6.100h-10.200v-20.800h10.200v-6.100z" fill="url(#ta2)"/>
<path d="M489 682.700l12.500-16.500v6.100h10v20.800h-10v6.100z" fill="url(#ta3)"/>
<path d="M572 765.500l-16.800-12h6.400v-11h20.800v11h6.400z" fill="url(#ta4)"/>
</svg>
<div class="ct" dir="rtl" style="left:178px;top:212.0px">ترازنامه</div>
<div class="ct" dir="rtl" style="left:178px;top:346.25px">صورت های</div>
<div class="ct" dir="rtl" style="left:178px;top:369.75px">مالی</div>
<div class="ct" dir="rtl" style="left:323px;top:334.5px">صورت</div>
<div class="ct" dir="rtl" style="left:323px;top:358.0px">حساب سود</div>
<div class="ct" dir="rtl" style="left:323px;top:381.5px">و زیان</div>
<div class="ct" dir="rtl" style="left:33px;top:334.5px">صورت</div>
<div class="ct" dir="rtl" style="left:33px;top:358.0px">سودو زیان</div>
<div class="ct" dir="rtl" style="left:33px;top:381.5px">جامع</div>
<div class="ct" dir="rtl" style="left:178px;top:478.5px">صورت</div>
<div class="ct" dir="rtl" style="left:178px;top:502.0px">گردش وجوه</div>
<div class="ct" dir="rtl" style="left:178px;top:525.5px">نقد</div></div></div>
<div class="abs" style="left:44.5px;top:530.5px;width:229px;height:128.5px;overflow:hidden;background:#f2f2f2"><div class="mini"><div class="abs mb" style="left:1002.0px;top:24.2px;width:175.0px;height:127.2px;line-height:117.2px;font-size:22px" dir="rtl">۱- ترازنامه</div><div class="ml" dir="rtl" style="left:34.9px;top:199.7px;width:1128.6px;">ترازنامه که با عنوان بیلان و یا صورت وضعیت مالی نیز از آن یاد می شود، گزارشی از دارایی ها، بدهی ها، سرمایه و حقوق صاحبان سهام یک شرکت را در</div><div class="ml" dir="rtl" style="left:316.6px;top:241.5px;width:846.9px;">ترازنامه به عنوان یکی از صورت های مالی اساسی شناخته شده است که اطلاعات مالی سازمان را به ذینفعان،</div><div class="mc" dir="rtl" style="left:426.7px;top:311.3px;width:375.7px;">دارایی سازمان = بدهی + سرمایه (حقوق صاحبان سهام)</div><div class="abs" style="left:278.0px;top:406.8px;width:646.7px;height:221.1px;background:#fff;border:3px solid #8a8a8a"></div><div class="abs" style="left:278.0px;top:433.6px;width:646.7px;height:3px;background:#8a8a8a"></div><div class="abs" style="left:278.0px;top:483.0px;width:646.7px;height:3px;background:#8a8a8a"></div><div class="abs" style="left:278.0px;top:531.3px;width:646.7px;height:3px;background:#8a8a8a"></div><div class="abs" style="left:278.0px;top:579.6px;width:322.0px;height:3px;background:#8a8a8a"></div><div class="abs" style="left:600.0px;top:433.6px;width:3px;height:194.3px;background:#8a8a8a"></div><div class="mc" dir="rtl" style="left:278.0px;top:406.2px;width:646.7px;font-size:11px">ترازنامه</div><div class="mc" dir="rtl" style="left:278.0px;top:444.3px;width:322.0px;font-size:11px">بدهی</div><div class="mc" dir="rtl" style="left:600.0px;top:444.3px;width:324.7px;font-size:11px">دارایی</div><div class="mc" dir="rtl" style="left:278.0px;top:493.2px;width:322.0px;font-size:11px">بدهی جاری (بدهی کوتاه مدت)</div><div class="mc" dir="rtl" style="left:600.0px;top:493.2px;width:324.7px;font-size:11px">دارایی جاری</div><div class="mc" dir="rtl" style="left:278.0px;top:541.5px;width:322.0px;font-size:11px">حقوق صاحبان سهام (سرمایه)</div><div class="mc" dir="rtl" style="left:600.0px;top:565.6px;width:324.7px;font-size:11px">دارایی بلند مدت</div><div class="mc" dir="rtl" style="left:278.0px;top:589.8px;width:322.0px;font-size:11px">منابع مالی (بستانکاران، صاحبان سهام)</div></div></div>
<div class="abs" style="left:44.5px;top:685.5px;width:229px;height:128.5px;overflow:hidden;background:#f2f2f2"><div class="mini"><div class="abs mb" style="left:986.4px;top:20.4px;width:190.5px;height:86.9px;line-height:76.9px;font-size:21px" dir="rtl">۱-۱ دارایی</div><div class="ml" dir="rtl" style="left:32.2px;top:123.5px;width:1131.3px;">دارایی ها به دو دسته جاری و بلند مدت تقسیم می شوند. این طبقه بندی بر اساس قدرت نقد شوندگی مشخص می شود. برای مثال حساب های دریافتنی،</div><div class="ml" dir="rtl" style="left:32.2px;top:165.3px;width:1131.3px;">بهادار، وجه نقد و بالقوه موجودی کالا که قدرت نقد شوندگی بالایی دارند جزء دارایی های جاری می باشند. دارایی بلند مدت آن دسته از دارایی ها شامل</div><div class="ml" dir="rtl" style="left:32.2px;top:206.1px;width:1131.3px;">آلات، املاک و ... می باشد که عمر مفید بلند مدتی دارند و برای استفاده به این منظور تهیه شده اند. دارایی ثابت هم گفته می شود که استهلاک شامل</div><div class="ml" dir="rtl" style="left:143.8px;top:246.89999999999998px;width:1019.7px;">به غیر از زمین که دارایی ثابت محسوب می شود ولی استهلاک ندارد. در ترازنامه دارایی ها بر اساس قدرت نقد شوندگی شان مرتب می</div><div class="abs mb" style="left:986.4px;top:299.5px;width:190.5px;height:86.9px;line-height:76.9px;font-size:21px" dir="rtl">۲-۱ بدهی</div><div class="ml" dir="rtl" style="left:32.2px;top:391.8px;width:1131.3px;">بدهی نیز مانند دارایی به بدهی های جاری و بلند مدت تقسیم می شود. بدهی ها شامل تعهدات شرکت به بستانکاران می باشد. بدهی بلند مدت شامل وام</div><div class="ml" dir="rtl" style="left:432.0px;top:433.1px;width:731.5px;">مانده حساب می باشد و بدهی های جاری شامل حساب های پرداختنی و مانند این درآمده و ... می</div><div class="abs mb" style="left:798.6px;top:493.7px;width:378.4px;height:83.2px;line-height:73.2px;font-size:21px" dir="rtl">۳-۱ حقوق صاحبان سهام</div><div class="ml" dir="rtl" style="left:128.8px;top:596.8px;width:1034.7px;">حقوق صاحبان سهام عبارت است از مبلغ سرمایه گذاری اولیه سهامداران و سود انباشته ای که در شرکت باقی مانده است و تقسیم نشده</div></div></div>
<div class="abs" style="left:44.5px;top:840.5px;width:229px;height:128.5px;overflow:hidden;background:#f2f2f2"><div class="mini"><div class="abs mb" style="left:771.7px;top:34.9px;width:405.2px;height:120.8px;line-height:110.8px;font-size:22px" dir="rtl">۲- صورتحساب سود و زیان</div><div class="ml" dir="rtl" style="left:45.6px;top:204.0px;width:1117.9px;">کلیه پول هایی که از فعالیت های یک سازمان اقتصادی در یک دوره مالی بدست می آید و یا خرج می شود مانند درآمد، هزینه، سود و زیان را نشان می</div><div class="ml" dir="rtl" style="left:45.6px;top:243.7px;width:1117.9px;">دهد. در این صورت مالی می بایست درآمدها و هزینه های یک دوره مالی مشخص شود و گزارشی که در آن تمام درآمدها کسر و هزینه در اینجا از آن کسر</div><div class="ml" dir="rtl" style="left:767.5px;top:283.4px;width:396.1px;">شود و در پایان سود و یا زیان سازمان مشخص می</div><div class="abs mb" style="left:965.0px;top:362.3px;width:212.0px;height:127.2px;line-height:117.2px;font-size:22px" dir="rtl">۲-۱ درآمد ها</div><div class="ml" dir="rtl" style="left:45.6px;top:526.0px;width:1117.9px;">درآمد در این گزارش شامل درآمدهای عملیاتی و غیر عملیاتی است که درآمدهای عملیاتی به آن دسته از درآمدها می گویند که در نتیجه فعالیت های شرکت</div><div class="ml" dir="rtl" style="left:45.6px;top:565.7px;width:1117.9px;">کسب می گردد. درآمدهای غیر عملیاتی در نتیجه فعالیت شرکت بدست نمی آید مانند زمین که برای شرکت خریداری شده و بعد از فروش درآمد حاصل از</div><div class="ml" dir="rtl" style="left:965.0px;top:606.5px;width:198.6px;">درآمد غیر عملیاتی می</div></div></div>
<div class="abs" style="left:44.5px;top:995.5px;width:229px;height:127px;overflow:hidden;background:#f2f2f2"><div class="mini"><div class="abs mb" style="left:968.7px;top:24.2px;width:208.2px;height:127.2px;line-height:117.2px;font-size:22px" dir="rtl">۲-۲ هزینه ها</div><div class="ml" dir="rtl" style="left:37.6px;top:186.3px;width:1126.0px;">گروه به هزینه های عملیاتی و غیر عملیاتی و بهای تمام شده کالا برای شرکت هایی که دارای محصول می باشند طبقه بندی می شوند. هزینه های بهای</div><div class="ml" dir="rtl" style="left:37.6px;top:229.2px;width:1126.0px;">شامل هزینه هایی می باشند که برای تولید محصول گرفته مواد تولید، هزینه کارمند و هزینه سربار می شود. هزینه عملیاتی به تمامی هزینه هایی که صرف</div><div class="ml" dir="rtl" style="left:37.6px;top:266.8px;width:1126.0px;">بازاریابی و اداری و مالی گفته می شود. هزینه هایی که در قالب بهای تمام شده و هزینه های عملیاتی نباشند هزینه های غیر عملیاتی نام دارند که این نوع</div><div class="ml" dir="rtl" style="left:746.0px;top:307.0px;width:417.5px;">هزینه ها به فعالیت شرکت مرتبط نمی شود و مانند</div><div class="mc" dir="rtl" style="left:445.4px;top:388.6px;width:322.0px;">هزینه های دوره مالی - درآمد دوره مالی = سود ویژه</div><div class="ml" dir="rtl" style="left:37.6px;top:516.3px;width:1126.0px;">در تهیه سود و زیان یک شرکت لازم است که درآمدهای عملیاتی و سپس هزینه عملیاتی آورده می شود و نتیجه تفاضل آن از تفاضل درآمدهای غیر عملیاتی</div><div class="ml" dir="rtl" style="left:230.8px;top:564.6px;width:932.8px;">هزینه های عملیاتی کسر گردد که سود و زیان قبل از مالیات بدست می آید و با کسر مالیات از این مبلغ سود و زیان ویژه بدست</div></div></div>
<div class="abs" style="left:41px;top:372px;width:236px;height:136px;border:3px solid #ea9a86;pointer-events:none"><div style="width:100%;height:100%;border:1px solid #3a2420"></div></div>
<div class="abs" style="left:299px;top:198px;width:19px;height:924px;background:#0a0a0a"></div>
<div class="abs sbtn" style="left:299px;top:198px;width:19px;height:19px"></div>
<div class="abs sbtn" style="left:299px;top:218px;width:19px;height:274px"></div>
<div class="abs sbtn" style="left:299px;top:1102px;width:19px;height:19px"></div>
<div class="abs" style="left:322px;top:198px;width:1px;height:924px;background:#4a4a4a"></div>
<div class="abs" style="left:326px;top:1120px;width:1274px;height:1px;background:#4a4a4a"></div>
<svg class="abs" style="left:299px;top:198px" width="20" height="925" viewBox="0 0 20 925"><path d="M4.500 12.500l5-5 5 5z" fill="#fff"/><path d="M4.500 911.500l5 5 5-5z" fill="#fff"/></svg>

<div class="abs" style="left:1580px;top:198px;width:19px;height:855px;background:#0a0a0a"></div>
<div class="abs sbtn" style="left:1580px;top:198px;width:19px;height:19px"></div>
<div class="abs sbtn" style="left:1580px;top:260px;width:19px;height:41px"></div>
<div class="abs sbtn" style="left:1580px;top:1033px;width:19px;height:19px"></div>
<svg class="abs" style="left:1580px;top:198px" width="19" height="900" viewBox="0 0 19 900"><path d="M4.500 12l5-5 5 5z" fill="#fff"/><path d="M4.500 843l5 5 5-5z" fill="#fff"/>
<path d="M9.500 857.500l5.500 7.500h-2.500l3.500 8h-13l3.500-8h-2.500z" fill="#b4b4b4"/><path d="M9.500 894.500l5.500-7.500h-2.500l3.500-8h-13l3.500 8h-2.500z" fill="#b4b4b4"/></svg>


<div id="slide" class="slide" style="left:342px;top:311px">
<div class="abs tbox" style="left:1043px;top:23px;width:132px;height:123px"></div>
<div class="abs" dir="rtl" style="left:1048px;top:67px;width:131px;text-align:center;font-family:'DejaVu Sans Mono','DejaVu Sans',monospace;font-weight:bold;font-size:25.5px;line-height:30px;color:#333;letter-spacing:0">مقدمه</div>
<div class="bl" dir="rtl" style="top:163.5px">صورت های مالی یک سازمان ارائه دهنده اطلاعات مالی، شرایط دارایی و بدهی های یک سازمان</div>
<div class="bl" dir="rtl" style="top:205.0px">اقتصادی به صورت خلاصه و طبقه بندی می باشد. هدف از تشکیل یک سازمان سود آوری، تامین</div>
<div class="bl" dir="rtl" style="top:246.5px">مالی و فعالیت سرمایه گذاری می باشد. در این مقاله با تهیه <b>صورت های مالی</b> به بازنمایی درآمد</div>
<div class="bl" dir="rtl" style="top:288.5px">و هزینه های واحد تجاری می پردازیم. صورت های مالی به <b>صورت ترازنامه، صورت حساب</b></div>
<div class="bl" dir="rtl" style="top:330.0px"><b>سود و زیان، صورت گردش وجوه نقد، صورت سود و زیان</b> جامع در یک دوره زمانی تعیین</div>
<div class="bl" dir="rtl" style="top:371.5px">شده است. در ادامه هر یک از صورت های مالی به تفکیک توضیح و ماژول های مورد نیاز هر کدام</div>
<div class="bl" dir="rtl" style="top:413.0px">مشخص شده است. <u>نرم افزار یکپارچه مالی</u> و <u>نرم افزار حسابداری</u> با ایجاد یک الگو مناسب&nbsp; در</div>
<div class="bl" dir="rtl" style="top:454.5px">راستای تهیه دقیق ترین و سریع ترین صورت مالی مطابق با استاندارد حسابداری مدیران و</div>
<div class="bl" dir="rtl" style="top:496.0px">حسابداران را همراهی می کند. در نرم افزار حسابداری اطلاعات مورد نیاز برای صورت های مالی</div>
<div class="bl" dir="rtl" style="top:537.5px">را از ریز اطاعات ثبتی در قسمت های مختلف نرم افزار بدست می آورد و خطاهای احتمالی را تا</div>
<div class="bl" dir="rtl" style="top:578.5px">حدودی کاهش می دهد و امکان تهیه <b>صورت های مالی میان دوره و پایان دوره</b> را فراهم می</div>
<div class="bl last" dir="rtl" style="top:620.0px">کند.</div>
<svg class="abs" style="left:394px;top:167px" width="68" height="70" viewBox="736 478 68 70">
<path d="M757 481h35a8 8 0 0 1 8 8v40a4 4 0 0 1-4 4h-3.500v-36a5.500 5.500 0 0 0-5.500-5.500h-36v-4.500a6 6 0 0 1 6-6z" fill="#e6dddd"/>
<path d="M739 499a8 8 0 0 1 8-8h4v36.500a5.500 5.500 0 0 0 5.500 5.500h31.500v5a6 6 0 0 1-6 6h-35a8 8 0 0 1-8-8z" fill="#e6dddd"/>
<rect x="751.500" y="491.500" width="41" height="41.500" rx="4" fill="#e2d8d8"/>
<path d="M746 533v-35l5.500 0 20 22v-22h5l16 17.500v12.500l-16-17v22h-5l-19.500-21.500v21.500z" fill="#f2f2f2"/>
</svg>
<div class="abs" dir="rtl" style="left:298px;top:175px;width:94px;text-align:center;font-family:'DejaVu Sans',sans-serif;font-weight:bold;font-size:22px;line-height:30px;color:#e3dcdc;white-space:nowrap">میـــزان</div>
<div class="abs" dir="rtl" style="left:298px;top:205px;width:94px;text-align:center;font-family:'DejaVu Sans',sans-serif;font-weight:bold;font-size:10px;line-height:16px;color:#e3dcdc;white-space:nowrap">سیستم های مالی</div>
<svg class="abs" style="left:18px;top:169px" width="420" height="410" viewBox="360 480 420 410">
<defs>
<linearGradient id="m0" x1="0.3" y1="0" x2="0.7" y2="1"><stop offset="0" stop-color="#bdbdbd"/><stop offset="1" stop-color="#979797"/></linearGradient>
<linearGradient id="m1" x1="0.3" y1="0" x2="0.7" y2="1"><stop offset="0" stop-color="#f39258"/><stop offset="1" stop-color="#f5761a"/></linearGradient>
<linearGradient id="m2" x1="0.3" y1="0" x2="0.7" y2="1"><stop offset="0" stop-color="#c99436"/><stop offset="1" stop-color="#b0720a"/></linearGradient>
<linearGradient id="m3" x1="0.3" y1="0" x2="0.7" y2="1"><stop offset="0" stop-color="#cb4f35"/><stop offset="1" stop-color="#b83000"/></linearGradient>
<linearGradient id="m4" x1="0.3" y1="0" x2="0.7" y2="1"><stop offset="0" stop-color="#cb6a33"/><stop offset="1" stop-color="#b84c04"/></linearGradient>
<linearGradient id="ma0" x1="0" y1="0" x2="0" y2="1"><stop offset="0" stop-color="#b6b6b6"/><stop offset="1" stop-color="#9d9d9d"/></linearGradient>
<linearGradient id="ma2" x1="0" y1="0" x2="0" y2="1"><stop offset="0" stop-color="#c48d2c"/><stop offset="1" stop-color="#b0740c"/></linearGradient>
<linearGradient id="ma3" x1="0" y1="0" x2="0" y2="1"><stop offset="0" stop-color="#c8492c"/><stop offset="1" stop-color="#b83204"/></linearGradient>
<linearGradient id="ma4" x1="0" y1="0" x2="0" y2="1"><stop offset="0" stop-color="#cc6a30"/><stop offset="1" stop-color="#b84c05"/></linearGradient>
</defs>
<circle cx="572" cy="540.5" r="52" fill="#000" fill-opacity="0.10"/>
<circle cx="572" cy="539" r="52" fill="url(#m0)"/>
<circle cx="572" cy="684.5" r="52" fill="#000" fill-opacity="0.10"/>
<circle cx="572" cy="683" r="52" fill="url(#m1)"/>
<circle cx="717" cy="684.5" r="52" fill="#000" fill-opacity="0.10"/>
<circle cx="717" cy="683" r="52" fill="url(#m2)"/>
<circle cx="427" cy="684.5" r="52" fill="#000" fill-opacity="0.10"/>
<circle cx="427" cy="683" r="52" fill="url(#m3)"/>
<circle cx="572" cy="828.5" r="52" fill="#000" fill-opacity="0.10"/>
<circle cx="572" cy="827" r="52" fill="url(#m4)"/>
<path d="M572 600.500l16.800 12h-6.400v11h-20.800v-11h-6.400z" fill="url(#ma0)"/>
<path d="M655.200 682.700l-12.500 16.500v-6.100h-10.200v-20.800h10.200v-6.100z" fill="url(#ma2)"/>
<path d="M489 682.700l12.500-16.500v6.100h10v20.800h-10v6.100z" fill="url(#ma3)"/>
<path d="M572 765.500l-16.800-12h6.400v-11h20.800v11h6.400z" fill="url(#ma4)"/>
</svg>
<div class="ct" dir="rtl" style="left:178px;top:212.0px">ترازنامه</div>
<div class="ct" dir="rtl" style="left:178px;top:346.25px">صورت های</div>
<div class="ct" dir="rtl" style="left:178px;top:369.75px">مالی</div>
<div class="ct" dir="rtl" style="left:323px;top:334.5px">صورت</div>
<div class="ct" dir="rtl" style="left:323px;top:358.0px">حساب سود</div>
<div class="ct" dir="rtl" style="left:323px;top:381.5px">و زیان</div>
<div class="ct" dir="rtl" style="left:33px;top:334.5px">صورت</div>
<div class="ct" dir="rtl" style="left:33px;top:358.0px">سودو زیان</div>
<div class="ct" dir="rtl" style="left:33px;top:381.5px">جامع</div>
<div class="ct" dir="rtl" style="left:178px;top:478.5px">صورت</div>
<div class="ct" dir="rtl" style="left:178px;top:502.0px">گردش وجوه</div>
<div class="ct" dir="rtl" style="left:178px;top:525.5px">نقد</div>
</div>

<div id="status"></div>
<div class="t" style="left:10px;top:1127.5px;font-size:13px;line-height:20px;color:#fff;">Slide 2 of 19</div>
<div class="t" style="left:146px;top:1127.5px;font-size:12.7px;line-height:20px;color:#fff;">English (United States)</div>
<div class="t" style="left:319px;top:1127.5px;font-size:12.7px;line-height:20px;color:#fff;font-weight:bold">Accessibility: Investigate</div>
<div class="t" style="left:988px;top:1127.5px;font-size:13px;line-height:20px;color:#fff;">Notes</div>
<div class="t" style="left:1069px;top:1127.5px;font-size:13px;line-height:20px;color:#fff;">Comments</div>
<div class="t" style="left:1533px;top:1127.5px;font-size:12.5px;line-height:20px;color:#fff;">77%</div>
<div class="abs" style="left:1155px;top:1124px;width:50px;height:26px;background:#4f4f4f"></div>
<svg class="abs" style="left:0;top:1123px" width="1600" height="27" viewBox="0 1123 1600 27">
<g fill="none" stroke="#fff" stroke-width="1.200">
<!-- spell/book -->
<path d="M108.500 1131.500v11.500c2.500-1 5-1 7.500 0.800 2-1.500 4-1.800 6-1.300M108.500 1131.500c2.500-1 5-1 7.500 0.800v11M116 1132.300c2-1.600 4.500-1.800 7.500-0.800v4"/>
<path d="M119 1140.500l4.500-4.500 1.800 1.800-4.500 4.500-2.200 0.400z" fill="#fff" stroke="none"/>
<!-- accessibility -->
<path d="M303 1131.500a7 7 0 1 0 8 8.500" stroke-dasharray="3 1.600"/>
<path d="M306.500 1130v7.500M303 1134.500l3.500 3 4-3"/>
<path d="M308.500 1140.500l6 6M314.500 1140.500l-6 6" stroke-width="1.600"/>
<!-- notes -->
<path d="M969 1139.500h12M969 1142.500h12M969 1145.500h8"/>
</g>
<path d="M971 1136.500l4-4.500 4 4.500z" fill="#fff"/>
<!-- comments -->
<path d="M1049 1130.500h15.500v10h-10l-3.500 3.500v-3.500h-2z" fill="#fff"/>
<!-- normal view -->
<rect x="1171.500" y="1130.500" width="16" height="13" fill="none" stroke="#fff" stroke-width="1.300"/>
<rect x="1172" y="1131" width="4.500" height="12" fill="#fff"/><rect x="1178" y="1132" width="8.500" height="5.500" fill="#fff"/><path d="M1177 1139.500h10.500" stroke="#fff" stroke-width="1.300"/>
<!-- sorter -->
<g fill="#fff"><rect x="1221.500" y="1129.500" width="7" height="6"/><rect x="1230.500" y="1129.500" width="7" height="6"/><rect x="1221.500" y="1138" width="7" height="6"/><rect x="1230.500" y="1138" width="7" height="6"/></g>
<!-- reading view -->
<g fill="none" stroke="#fff" stroke-width="1.100"><path d="M1271.500 1130.500h6c1 0 1.500 0.500 1.500 1.500v11c0-1-0.500-1.500-1.500-1.500h-6zM1286.500 1130.500h-6c-1 0-1.500 0.500-1.500 1.500v11c0-1 0.500-1.500 1.500-1.500h6z"/><path d="M1273.500 1133.500h3.500M1273.500 1136h3.500M1273.500 1138.500h3.500M1281 1133.500h3.500M1281 1136h3.500M1281 1138.500h3.500M1279 1143v2.500"/></g>
<!-- slideshow -->
<g fill="none" stroke="#fff" stroke-width="1.200"><path d="M1321 1130.500h16M1323.500 1130.500v8h11v-8M1329 1138.500v3.500M1325.500 1146l3.500-4 3.500 4"/></g>
<!-- zoom -->
<path d="M1362.500 1137.500h8M1509.500 1137.500h8M1513.500 1133.500v8" stroke="#fff" stroke-width="1.100"/>
<path d="M1378.500 1137.500h124" stroke="#d0d0d0" stroke-width="1"/>
<path d="M1440.500 1134v7" stroke="#d0d0d0" stroke-width="1"/>
<rect x="1423" y="1131" width="5" height="13" fill="#fff"/>
<!-- fit -->
<g fill="none" stroke="#fff" stroke-width="1.100"><rect x="1578.500" y="1131.500" width="12" height="12"/><path d="M1581 1136.500v-2.500h2.500M1588 1136.500v-2.500h-2.500M1581 1138.500v2.500h2.500M1588 1138.500v2.500h-2.500"/></g><rect x="1583.500" y="1136.500" width="2" height="2" fill="#fff"/>
</svg>

<div id="taskbar"></div>
<div class="abs" style="left:494px;top:1150px;width:61px;height:50px;background:rgba(255,255,255,0.16)"></div>
<div class="abs" style="left:251px;top:1197px;width:51px;height:3px;background:#76b9ed"></div>
<div class="abs" style="left:375px;top:1197px;width:51px;height:3px;background:#76b9ed"></div>
<div class="abs" style="left:437px;top:1197px;width:51px;height:3px;background:#76b9ed"></div>
<div class="abs" style="left:494px;top:1197px;width:61px;height:3px;background:#76b9ed"></div>
<svg class="abs" style="left:0;top:1150px" width="1600" height="50" viewBox="0 1150 1600 50">
<!-- start -->
<g fill="#fff"><path d="M20 1167.500l8-1.200v8h-8zM29 1166.200l11-1.600v9.700h-11zM20 1175.300h8v8l-8-1.200zM29 1175.300h11v9.700l-11-1.600z"/></g>
<!-- search -->
<circle cx="93.500" cy="1171" r="9" fill="none" stroke="#fff" stroke-width="2.800"/><path d="M87 1178l-9.500 9.500" stroke="#fff" stroke-width="3.400" stroke-linecap="butt"/>
<!-- task view -->
<g fill="none" stroke="#fff" stroke-width="1.400"><path d="M140.500 1165.500v19M152.500 1165.500v19M140.500 1171.500h12M140.500 1179.500h12M158.500 1165.500v19"/></g><rect x="156.500" y="1171" width="4" height="4.500" fill="#fff"/>
<!-- calculator -->
<rect x="201.500" y="1160" width="23" height="30" rx="2.500" fill="#8a97a6"/>
<rect x="204.500" y="1163" width="17" height="6" fill="#4fc3f7"/>
<g fill="#e8ecf0"><rect x="204.500" y="1171.500" width="5" height="4.500"/><rect x="210.500" y="1171.500" width="5" height="4.500"/><rect x="204.500" y="1177" width="5" height="4.500"/><rect x="210.500" y="1177" width="5" height="4.500"/><rect x="204.500" y="1182.500" width="5" height="4.500"/><rect x="210.500" y="1182.500" width="5" height="4.500"/></g>
<rect x="216.500" y="1171.500" width="5" height="4.500" fill="#e8ecf0"/><rect x="216.500" y="1177" width="5" height="10" fill="#1f6fc4"/>
<!-- explorer -->
<path d="M262 1165.500a1.500 1.500 0 0 1 1.500-1.500h8l2.500 2.500h13.500a1.500 1.500 0 0 1 1.500 1.500v17h-27z" fill="#f4b63a"/>
<rect x="262" y="1168.500" width="27" height="17" rx="1" fill="#fcd667"/>
<path d="M266 1186v-9.500h19v9.500h-4.500v-5.500h-10v5.500z" fill="#3d9be0"/>
<rect x="270.500" y="1181" width="10" height="5" fill="#f9c84c"/>
<!-- firefox -->
<circle cx="338" cy="1176" r="13" fill="#ff9a1f"/>
<path d="M338 1163c5-3 9 0 10 3 3 2 4 6 3.500 10a13.500 13.500 0 0 1-27 0c0-4 1.500-7 4-9 0 2 1 3 2 3.500 1-4 4-6 7.500-7.500z" fill="#ff5a2e"/>
<path d="M343 1161c3 2 5 5 5.500 8 2 2.500 3 5 3 7.500 0 3-1 5-2 7 1-4 0-7-2-9-1-5-3-9-4.500-13.500z" fill="#ffd23f"/>
<circle cx="337.500" cy="1177.500" r="6.200" fill="#8a3fd4"/>
<path d="M331 1172c2-2 5-2.500 7.500-1-2 0.500-3 1.500-3.500 3-1.500 0-3-0.500-4-2z" fill="#ff8a1f"/>
<!-- chrome -->
<circle cx="399" cy="1175" r="13.500" fill="#e33b2e"/>
<path d="M399 1175l-11.700-6.750a13.500 13.500 0 0 0 5 18.400z" fill="#2ba24c"/>
<path d="M399 1175l-6.700 11.700a13.500 13.500 0 0 0 18.400-5 13.500 13.500 0 0 0 1.800-6.700z" fill="#fcc934"/>
<path d="M387.300 1168.250l6 10.400 6.400 9.800-7.400-1.750a13.500 13.500 0 0 1-5-18.450z" fill="#2ba24c"/>
<circle cx="399" cy="1175" r="6.200" fill="#fff"/><circle cx="399" cy="1175" r="4.800" fill="#4a8af4"/>
<circle cx="407.500" cy="1183.500" r="7.500" fill="#5b2d9c"/>
<!-- notepad -->
<path d="M452 1164l19-2 3 24-19 4z" fill="#cfe8f4"/>
<path d="M456 1163l15-1.500 2.500 22-15 3z" fill="#8ecbe6"/>
<path d="M449 1187l4-22 17-2-4 22z" fill="#d9eef7"/>
<path d="M451.500 1185l3.500-18 13-1.500-3.500 17.500z" fill="#6db6d6"/>
<path d="M453 1165.500l17.500-2.300" stroke="#7a8790" stroke-width="2" stroke-dasharray="1.500 1.500"/>
<!-- powerpoint -->
<circle cx="525" cy="1175" r="12" fill="#ed6c47"/>
<path d="M525 1163a12 12 0 0 1 12 12h-12z" fill="#ff8f6b"/>
<path d="M525 1175h12a12 12 0 0 1-12 12z" fill="#d35230"/>
<rect x="509" y="1167.500" width="15" height="15" rx="1.500" fill="#c43e1c"/>
<!-- tray -->
<g fill="none" stroke="#fff" stroke-width="1.300">
<path d="M1322.500 1179l7.500-7.500 7.500 7.500"/>
<rect x="1354.500" y="1168.500" width="15" height="10"/><path d="M1358 1182.500h8M1362 1178.500v4"/><rect x="1351.500" y="1166.500" width="4" height="6" fill="#1a3440"/>
<path d="M1381.500 1172.500h3l4-3.500v12l-4-3.500h-3z"/><path d="M1391 1171.500a5 5 0 0 1 0 7M1393.800 1169a8.500 8.500 0 0 1 0 12M1396.600 1166.500a12 12 0 0 1 0 17"/>
<path d="M1550.500 1166.500h17v12h-6l-3.500 3.500v-3.500h-7.500z"/>
</g>
<path d="M1595.500 1150v50" stroke="#6a7a88" stroke-width="1"/>
</svg>
<div class="t" style="left:512px;top:1166px;width:9px;text-align:center;font-size:10px;line-height:18px;color:#fff;font-weight:bold">P</div>
<div class="t" dir="rtl" style="left:400px;top:1176px;width:15px;text-align:center;font-size:8px;line-height:14px;color:#fff;font-weight:bold;font-family:'DejaVu Sans',sans-serif">ش</div>
<div class="t" dir="rtl" style="left:1416px;top:1166px;width:22px;text-align:center;font-size:13px;line-height:20px;color:#fff;font-family:'DejaVu Sans',sans-serif">فا</div>
<div class="t" style="left:1452px;top:1153.500px;width:80px;text-align:center;font-size:14.500px;line-height:20px;color:#fff">4:45 PM</div>
<div class="t" style="left:1452px;top:1176.500px;width:80px;text-align:center;font-size:14.500px;line-height:20px;color:#fff">11/28/2023</div>

</div>
</body>
</html>
